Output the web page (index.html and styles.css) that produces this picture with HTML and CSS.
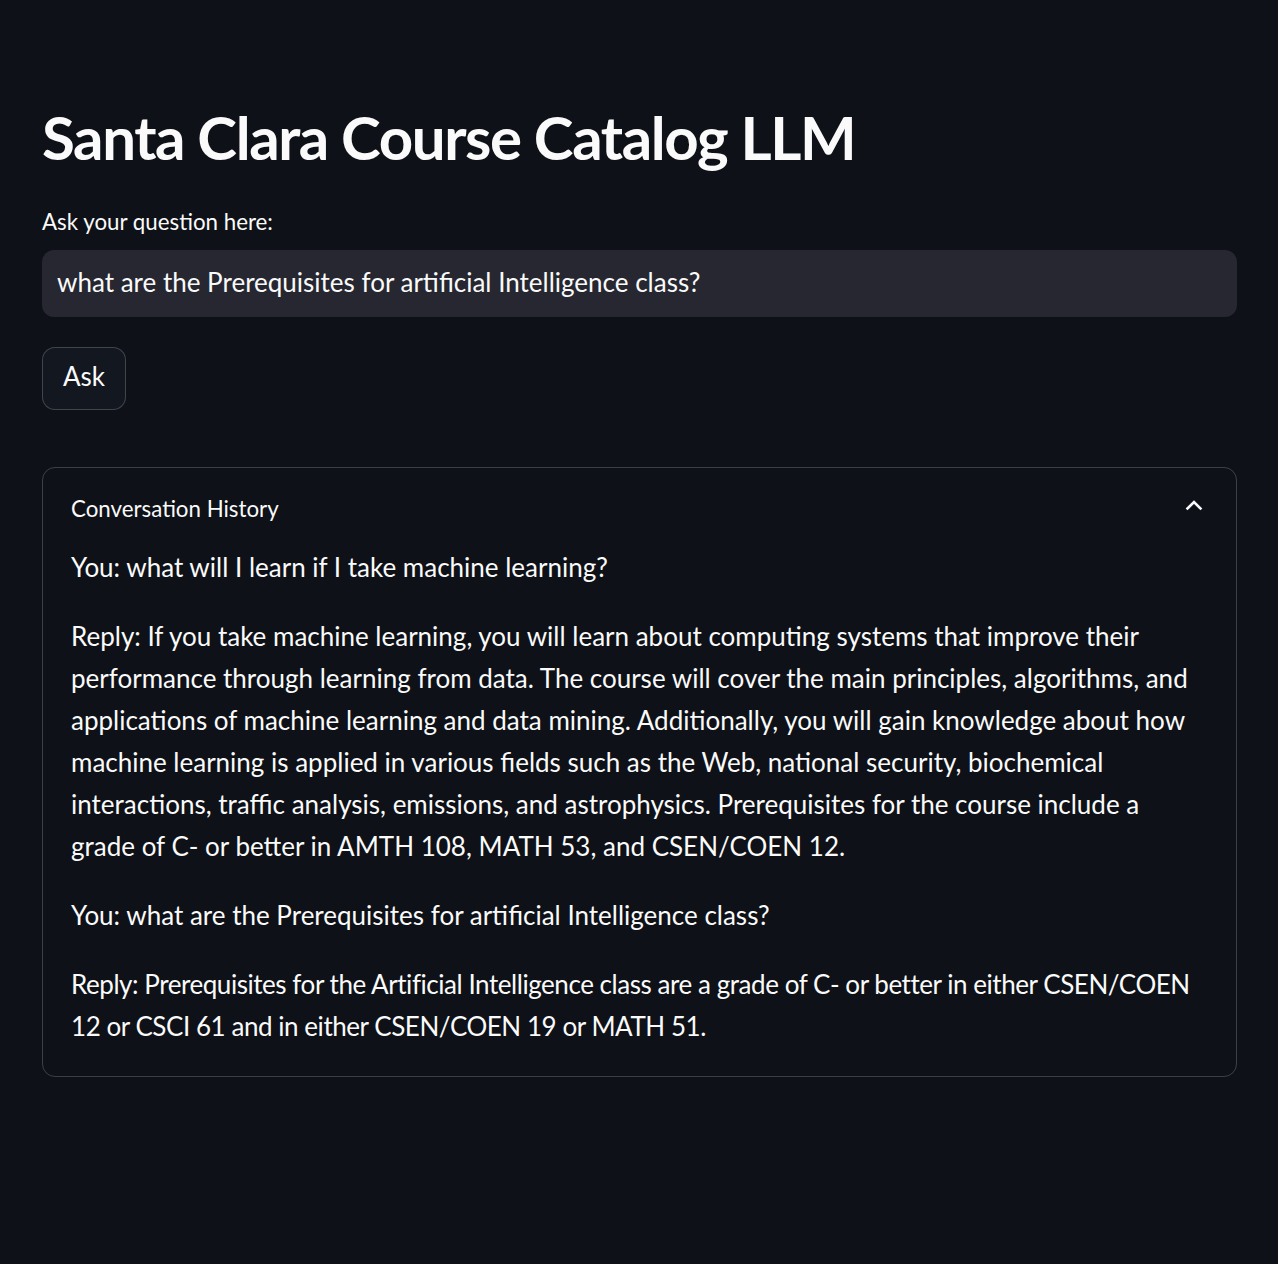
FILE: index.html
```html
<!DOCTYPE html>
<html lang="en">
<head>
<meta charset="utf-8">
<title>Santa Clara Course Catalog LLM</title>
<link rel="stylesheet" href="styles.css">
</head>
<body>
<main class="app">
  <h1 class="title">Santa Clara Course Catalog LLM</h1>
  <label class="field-label" for="q">Ask your question here:</label>
  <div class="input-wrap">
    <input id="q" class="text-input" type="text" value="what are the Prerequisites for artificial Intelligence class?">
  </div>
  <div class="btn-row">
    <button class="btn" type="button">Ask</button>
  </div>
  <section class="expander">
    <div class="exp-header">
      <span class="exp-title">Conversation History</span>
      <svg class="chev" width="20" height="20" viewBox="0 0 20 20" aria-hidden="true"><path d="M3.5 13.5 L10 7 L16.5 13.5" fill="none" stroke="#fafafa" stroke-width="2.6" stroke-linecap="square"/></svg>
    </div>
    <div class="exp-body">
      <p>You: what will I learn if I take machine learning?</p>
      <p>Reply: If you take machine learning, you will learn about computing systems that improve their performance through learning from data. The course will cover the main principles, algorithms, and applications of machine learning and data mining. Additionally, you will gain knowledge about how machine learning is applied in various fields such as the Web, national security, biochemical interactions, traffic analysis, emissions, and astrophysics. Prerequisites for the course include a grade of C- or better in AMTH 108, MATH 53, and CSEN/COEN 12.</p>
      <p>You: what are the Prerequisites for artificial Intelligence class?</p>
      <p class="tight">Reply: Prerequisites for the Artificial Intelligence class are a grade of C- or better in either CSEN/COEN 12 or CSCI 61 and in either CSEN/COEN 19 or MATH 51.</p>
    </div>
  </section>
</main>
</body>
</html>
```
FILE: styles.css
```css
html, body {
  margin: 0;
  padding: 0;
  background: #0e1117;
  color: #fafafa;
  font-family: "Lato", "Open Sans", sans-serif;
}
.app {
  width: 1195px;
  margin-left: 42px;
  padding-top: 98px;
  display: flex;
  flex-direction: column;
}
.title {
  margin: 0;
  font-size: 60px;
  font-weight: 700;
  line-height: 79px;
  letter-spacing: -1.4px;
}
.field-label {
  margin-top: 27px;
  font-size: 22.3px;
  line-height: 36px;
  height: 36px;
}
.input-wrap {
  margin-top: 10px;
  height: 67px;
  background: #262730;
  border-radius: 12px;
  display: flex;
  align-items: center;
}
.text-input {
  width: 100%;
  border: 0;
  outline: 0;
  background: transparent;
  color: #fafafa;
  font-family: inherit;
  font-size: 26px;
  padding: 0 15px 3px 15px;
}
.btn-row {
  margin-top: 30px;
  display: flex;
}
.btn {
  width: 84px;
  height: 63px;
  padding: 0 0 5px 0;
  background: #131720;
  border: 1px solid rgba(250, 250, 250, 0.2);
  border-radius: 13px;
  color: #fafafa;
  font-family: inherit;
  font-size: 26px;
}
.expander {
  margin-top: 57px;
  border: 1px solid rgba(250, 250, 250, 0.2);
  border-radius: 13px;
  padding: 0 28px 2px 28px;
}
.exp-header {
  display: flex;
  justify-content: space-between;
  align-items: center;
  height: 80px;
}
.exp-title {
  font-size: 22.3px;
}
.chev {
  margin-right: 4px;
  margin-top: -6px;
}
.exp-body {
  margin-top: -2px;
}
.exp-body p {
  margin: 0 0 27px 0;
  font-size: 26px;
  line-height: 42px;
}
.exp-body p.tight {
  letter-spacing: -0.45px;
}
```
